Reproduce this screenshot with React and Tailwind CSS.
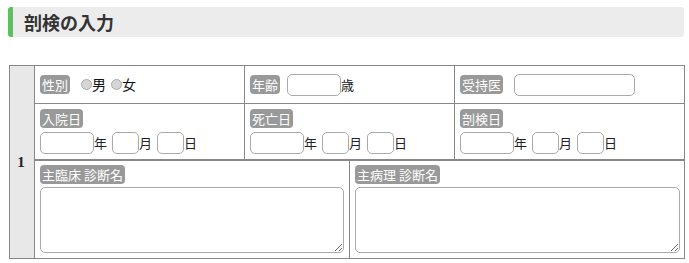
import React from 'react';

const Badge = ({ children }) => (
  <span className="inline-block rounded-[4px] bg-[#999] px-[2px] text-[13px] leading-[19px] text-white whitespace-nowrap">
    {children}
  </span>
);

const TextInput = ({ width }) => (
  <input type="text" className={`h-[22px] ${width} rounded-[5px] border border-[#aaa] bg-white outline-none`} />
);

const Radio = ({ label }) => (
  <label className="flex items-center">
    <span className="h-[11px] w-[11px] rounded-full border border-[#aaa] bg-[#d6d6d6]"></span>
    <span className="text-[14px] text-[#111]">{label}</span>
  </label>
);

const DateInputs = () => (
  <div className="mt-[4px] flex items-center text-[13px] text-[#222]">
    <TextInput width="w-[54px]" />
    <span className="mr-[5px]">年</span>
    <TextInput width="w-[27px]" />
    <span className="mr-[5px]">月</span>
    <TextInput width="w-[27px]" />
    <span>日</span>
  </div>
);

const DateCell = ({ label, last }) => (
  <div className={`h-[55px] px-[5px] pt-[5px] ${last ? '' : 'border-r border-[#888]'}`}>
    <div className="flex">
      <Badge>{label}</Badge>
    </div>
    <DateInputs />
  </div>
);

export default function App() {
  return (
    <div className="w-[689px] h-[263px] bg-white pt-[7px]" style={{ fontFamily: '"Noto Sans CJK JP", "Noto Sans", sans-serif' }}>
      <div className="ml-[8px] flex h-[30px] w-[676px] items-center rounded-[3px] border-l-[5px] border-[#5cc15c] bg-[#ececec] pl-[11px]">
        <h2 className="text-[18px] font-bold text-[#333]">剖検の入力</h2>
      </div>

      <div className="ml-[9px] mt-[28px] flex w-[676px] border border-[#888]">
        <div className="flex w-[25px] items-center justify-center border-r border-[#888] bg-[#e8e8e8] pr-[2px]">
          <span className="text-[15px] font-bold text-[#222]" style={{ fontFamily: '"Liberation Serif", serif' }}>1</span>
        </div>

        <div className="flex flex-1 flex-col">
          <div className="grid grid-cols-[210px_210px_229px] border-b border-[#888]">
            <div className="flex h-[37px] items-center border-r border-[#888] px-[5px]">
              <Badge>性別</Badge>
              <div className="ml-[11px] flex items-center gap-[5px]">
                <Radio label="男" />
                <Radio label="女" />
              </div>
            </div>
            <div className="flex h-[37px] items-center border-r border-[#888] px-[5px]">
              <Badge>年齢</Badge>
              <div className="ml-[7px] flex items-center text-[13px] text-[#222]">
                <TextInput width="w-[54px]" />
                <span>歳</span>
              </div>
            </div>
            <div className="flex h-[37px] items-center px-[5px]">
              <Badge>受持医</Badge>
              <div className="ml-[11px] flex items-center">
                <TextInput width="w-[121px]" />
              </div>
            </div>
          </div>

          <div className="grid grid-cols-[210px_210px_229px] border-b border-[#888]">
            <DateCell label="入院日" />
            <DateCell label="死亡日" />
            <DateCell label="剖検日" last />
          </div>

          <div className="grid grid-cols-[315px_334px] border-t border-[#888]">
            <div className="flex h-[97px] flex-col border-r border-[#888] px-[5px] pt-[4px]">
              <div className="flex">
                <Badge>主臨床 診断名</Badge>
              </div>
              <textarea className="mt-[3px] h-[66px] w-full rounded-[5px] border border-[#aaa] bg-white outline-none"></textarea>
            </div>
            <div className="flex h-[97px] flex-col pl-[5px] pr-[4px] pt-[4px]">
              <div className="flex">
                <Badge>主病理 診断名</Badge>
              </div>
              <textarea className="mt-[3px] h-[66px] w-full rounded-[5px] border border-[#aaa] bg-white outline-none"></textarea>
            </div>
          </div>
        </div>
      </div>
    </div>
  );
}
